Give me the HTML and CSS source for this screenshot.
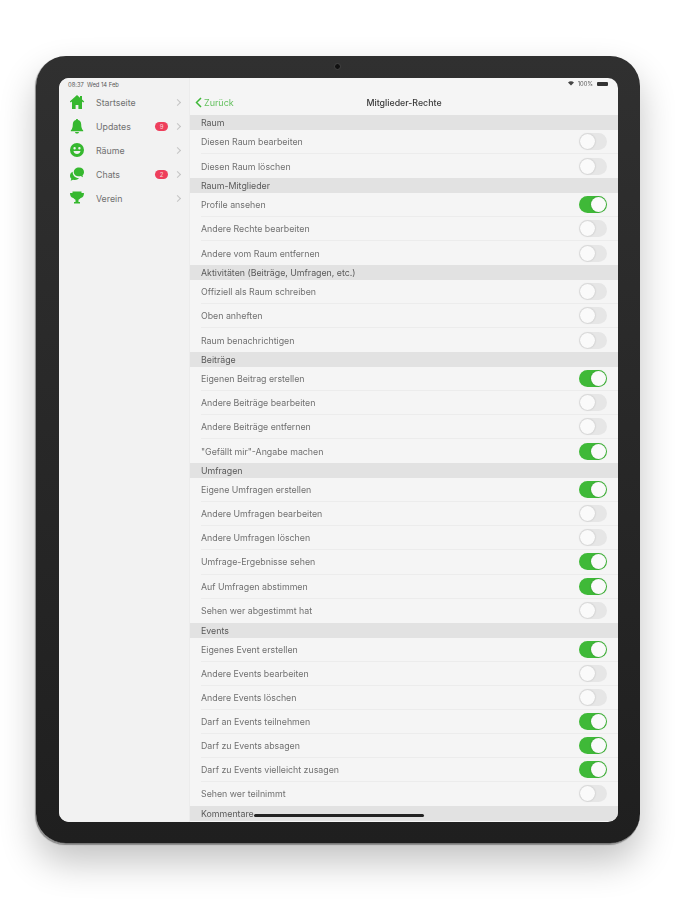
FILE: index.html
```html
<!DOCTYPE html>
<html lang="de">

<head>
  <meta charset="UTF-8">
  <meta name="viewport" content="width=device-width, initial-scale=1.0">
  <title>Mitglieder-Rechte</title>
  <link rel="stylesheet" href="styles.css">
</head>

<body>
  <div class="device">
    <div class="camera"></div>
    <div class="screen">
      <aside class="sidebar">
        <div class="status status-left">08:37&nbsp; Wed 14 Feb</div>
        <ul class="menu">
          <li class="menu-item">
            <svg class="menu-icon" viewBox="0 0 16 16"><path d="M8 1 .8 7.6l.9 1L3 7.5V15h3.6v-4h2.8v4H13V7.5l1.3 1.1.9-1L13 5.600V2h-2v1.800z"/></svg>
            <span class="menu-label">Startseite</span>
            <span class="chevron"></span>
          </li>
          <li class="menu-item">
            <svg class="menu-icon" viewBox="0 0 16 16"><path d="M8 1c-.7 0-1.100.5-1.100 1.100C5 2.600 3.800 4.200 3.800 6.400c0 3-.7 4.600-2 6v.9h12.400v-.9c-1.300-1.400-2-3-2-6 0-2.200-1.200-3.800-3.100-4.300C9.100 1.500 8.700 1 8 1zM6 14c.2 1 1 1.600 2 1.600s1.800-.6 2-1.600z"/></svg>
            <span class="menu-label">Updates</span>
            <span class="badge">9</span>
            <span class="chevron"></span>
          </li>
          <li class="menu-item">
            <svg class="menu-icon" viewBox="0 0 16 16"><path fill-rule="evenodd" d="M8 1a7 7 0 1 0 0 14A7 7 0 0 0 8 1zM5.600 5a1 1 0 1 1 0 2.400 1 1 0 0 1 0-2.400zm4.800 0a1 1 0 1 1 0 2.400 1 1 0 0 1 0-2.400zM4.500 9h7c-.3 1.900-1.700 3-3.500 3S4.800 10.900 4.500 9z"/></svg>
            <span class="menu-label">Räume</span>
            <span class="chevron"></span>
          </li>
          <li class="menu-item">
            <svg class="menu-icon" viewBox="0 0 16 16"><path d="M10 1.500c-3 0-5.200 1.900-5.200 4.400s2.200 4.400 5.200 4.400c.6 0 1.200-.1 1.700-.2l2.300 1.100-.5-2c1-.8 1.500-2 1.500-3.300 0-2.500-2-4.400-5-4.400z"/><path d="M3.700 5.800C2 6.500 1 8 1 9.700c0 1.200.5 2.200 1.300 3l-.6 2 2.400-1c.6.200 1.200.3 1.900.3 1.700 0 3.200-.7 4-1.900-3.700.2-6.500-2.600-6.300-6.300z"/></svg>
            <span class="menu-label">Chats</span>
            <span class="badge">2</span>
            <span class="chevron"></span>
          </li>
          <li class="menu-item">
            <svg class="menu-icon" viewBox="0 0 16 16"><path d="M3.500 1.500h9V3H15c0 3-1.200 4.700-3.300 5-.6.900-1.400 1.500-2.200 1.700V12H11v1.500H5V12h1.500V9.700C5.700 9.500 4.900 8.900 4.300 8 2.200 7.700 1 6 1 3h2.500z"/></svg>
            <span class="menu-label">Verein</span>
            <span class="chevron"></span>
          </li>
        </ul>
      </aside>

      <main class="content">
        <div class="status status-right">
          <svg class="wifi" viewBox="0 0 10 8"><path d="M5 7.500 0 2.200C3-.6 7-.6 10 2.200z"/></svg>
          <span>100%</span>
          <span class="battery"></span>
        </div>
        <header class="navbar">
          <span class="back">
            <svg class="back-icon" viewBox="0 0 7 11"><path d="M6 1 1.500 5.500 6 10"/></svg>
            Zurück
          </span>
          <h1 class="title">Mitglieder-Rechte</h1>
        </header>

        <div class="section">Raum</div>
        <div class="row"><span>Diesen Raum bearbeiten</span><i class="toggle"></i></div>
        <div class="row"><span>Diesen Raum löschen</span><i class="toggle"></i></div>

        <div class="section">Raum-Mitglieder</div>
        <div class="row"><span>Profile ansehen</span><i class="toggle on"></i></div>
        <div class="row"><span>Andere Rechte bearbeiten</span><i class="toggle"></i></div>
        <div class="row"><span>Andere vom Raum entfernen</span><i class="toggle"></i></div>

        <div class="section">Aktivitäten (Beiträge, Umfragen, etc.)</div>
        <div class="row"><span>Offiziell als Raum schreiben</span><i class="toggle"></i></div>
        <div class="row"><span>Oben anheften</span><i class="toggle"></i></div>
        <div class="row"><span>Raum benachrichtigen</span><i class="toggle"></i></div>

        <div class="section">Beiträge</div>
        <div class="row"><span>Eigenen Beitrag erstellen</span><i class="toggle on"></i></div>
        <div class="row"><span>Andere Beiträge bearbeiten</span><i class="toggle"></i></div>
        <div class="row"><span>Andere Beiträge entfernen</span><i class="toggle"></i></div>
        <div class="row"><span>"Gefällt mir"-Angabe machen</span><i class="toggle on"></i></div>

        <div class="section">Umfragen</div>
        <div class="row"><span>Eigene Umfragen erstellen</span><i class="toggle on"></i></div>
        <div class="row"><span>Andere Umfragen bearbeiten</span><i class="toggle"></i></div>
        <div class="row"><span>Andere Umfragen löschen</span><i class="toggle"></i></div>
        <div class="row"><span>Umfrage-Ergebnisse sehen</span><i class="toggle on"></i></div>
        <div class="row"><span>Auf Umfragen abstimmen</span><i class="toggle on"></i></div>
        <div class="row"><span>Sehen wer abgestimmt hat</span><i class="toggle"></i></div>

        <div class="section">Events</div>
        <div class="row"><span>Eigenes Event erstellen</span><i class="toggle on"></i></div>
        <div class="row"><span>Andere Events bearbeiten</span><i class="toggle"></i></div>
        <div class="row"><span>Andere Events löschen</span><i class="toggle"></i></div>
        <div class="row"><span>Darf an Events teilnehmen</span><i class="toggle on"></i></div>
        <div class="row"><span>Darf zu Events absagen</span><i class="toggle on"></i></div>
        <div class="row"><span>Darf zu Events vielleicht zusagen</span><i class="toggle on"></i></div>
        <div class="row"><span>Sehen wer teilnimmt</span><i class="toggle"></i></div>

        <div class="section">Kommentare</div>
      </main>
      <div class="home-bar"></div>
    </div>
  </div>
</body>

</html>
```

FILE: styles.css
```css
* {
  padding: 0;
  margin: 0;
  box-sizing: border-box;
}

html,
body {
  height: 900px;
  overflow: hidden;
}

body {
  padding: 56px 35px 0 36px;
  background-color: #fff;
  font-family: "Inter", "Liberation Sans", sans-serif;
  color: #4a4a4a;
}

.device {
  position: relative;
  width: 604px;
  height: 788px;
  padding: 22px 22px 22px 23px;
  background: linear-gradient(#303030, #1f1f1f);
  border-radius: 30px;
  border-bottom: 1px solid #777;
  box-shadow: -1px 1px 1px #8a8a8a, 0 18px 36px rgba(0, 0, 0, 0.24);
}

.camera {
  position: absolute;
  top: 7px;
  left: 298px;
  width: 7px;
  height: 7px;
  border-radius: 50%;
  background-color: #111;
  border: 1px solid #444;
}

.screen {
  position: relative;
  display: flex;
  height: 744px;
  overflow: hidden;
  border-radius: 10px;
  background-color: #f5f5f5;
  filter: blur(0.5px);
}

/* Seitenleiste */
.sidebar {
  width: 131px;
  flex-shrink: 0;
  background-color: #f2f2f2;
  border-right: 1px solid #ececec;
}

.status {
  font-size: 5.800px;
  color: #555;
}

.status-left {
  height: 12px;
  padding: 3px 0 0 9px;
}

.menu {
  list-style: none;
}

.menu-item {
  display: flex;
  align-items: center;
  height: 24px;
  padding: 0 7px 0 10px;
  font-size: 8.800px;
  color: #707070;
}

.menu-icon {
  width: 16px;
  height: 16px;
  fill: #36b82f;
  flex-shrink: 0;
}

.menu-label {
  flex: 1;
  margin-left: 11px;
}

.badge {
  width: 13px;
  height: 9px;
  margin-right: 7px;
  border-radius: 5px;
  background-color: #ee3f5c;
  color: #fbd5da;
  font-size: 6px;
  line-height: 9px;
  text-align: center;
}

.chevron {
  width: 5px;
  height: 5px;
  margin-right: 2px;
  border-top: 1px solid #c4c4c4;
  border-right: 1px solid #c4c4c4;
  transform: rotate(45deg);
}

/* Inhalt */
.content {
  position: relative;
  flex: 1;
  min-width: 0;
}

.status-right {
  position: absolute;
  top: 2px;
  right: 10px;
  display: flex;
  align-items: center;
  gap: 4px;
}

.wifi {
  width: 6px;
  height: 5px;
  fill: #444;
}

.battery {
  width: 11px;
  height: 4px;
  border-radius: 1px;
  background-color: #333;
}

.navbar {
  position: relative;
  height: 37px;
  display: flex;
  align-items: center;
  justify-content: center;
  padding-top: 11px;
}

.back {
  position: absolute;
  left: 5px;
  top: 19px;
  display: flex;
  align-items: center;
  gap: 2px;
  font-size: 9px;
  color: #66c160;
}

.back-icon {
  width: 7px;
  height: 11px;
  fill: none;
  stroke: #3fb838;
  stroke-width: 1.500;
}

.title {
  font-size: 8.800px;
  font-weight: 500;
  color: #3a3a3a;
}

.section {
  height: 15px;
  padding-left: 11px;
  background-color: #e2e2e2;
  font-size: 8.800px;
  line-height: 15px;
  color: #5a5a5a;
}

.row {
  display: flex;
  align-items: center;
  justify-content: space-between;
  height: 24.040px;
  margin-left: 11px;
  padding-right: 11px;
  font-size: 8.800px;
  color: #707070;
  border-bottom: 1px solid #ececec;
}

.row:has(+ .section) {
  border-bottom: 0;
}

.toggle {
  position: relative;
  width: 28px;
  height: 17px;
  border-radius: 9px;
  background-color: #e6e6e6;
}

.toggle::after {
  content: "";
  position: absolute;
  top: 1px;
  left: 1px;
  width: 15px;
  height: 15px;
  border-radius: 50%;
  background-color: #fafafa;
  box-shadow: 0 0 2px rgba(0, 0, 0, 0.22);
}

.toggle.on {
  background-color: #3fb938;
}

.toggle.on::after {
  left: 12px;
}

.home-bar {
  position: absolute;
  left: 195px;
  bottom: 5px;
  width: 170px;
  height: 3px;
  border-radius: 2px;
  background-color: #222;
}
```
